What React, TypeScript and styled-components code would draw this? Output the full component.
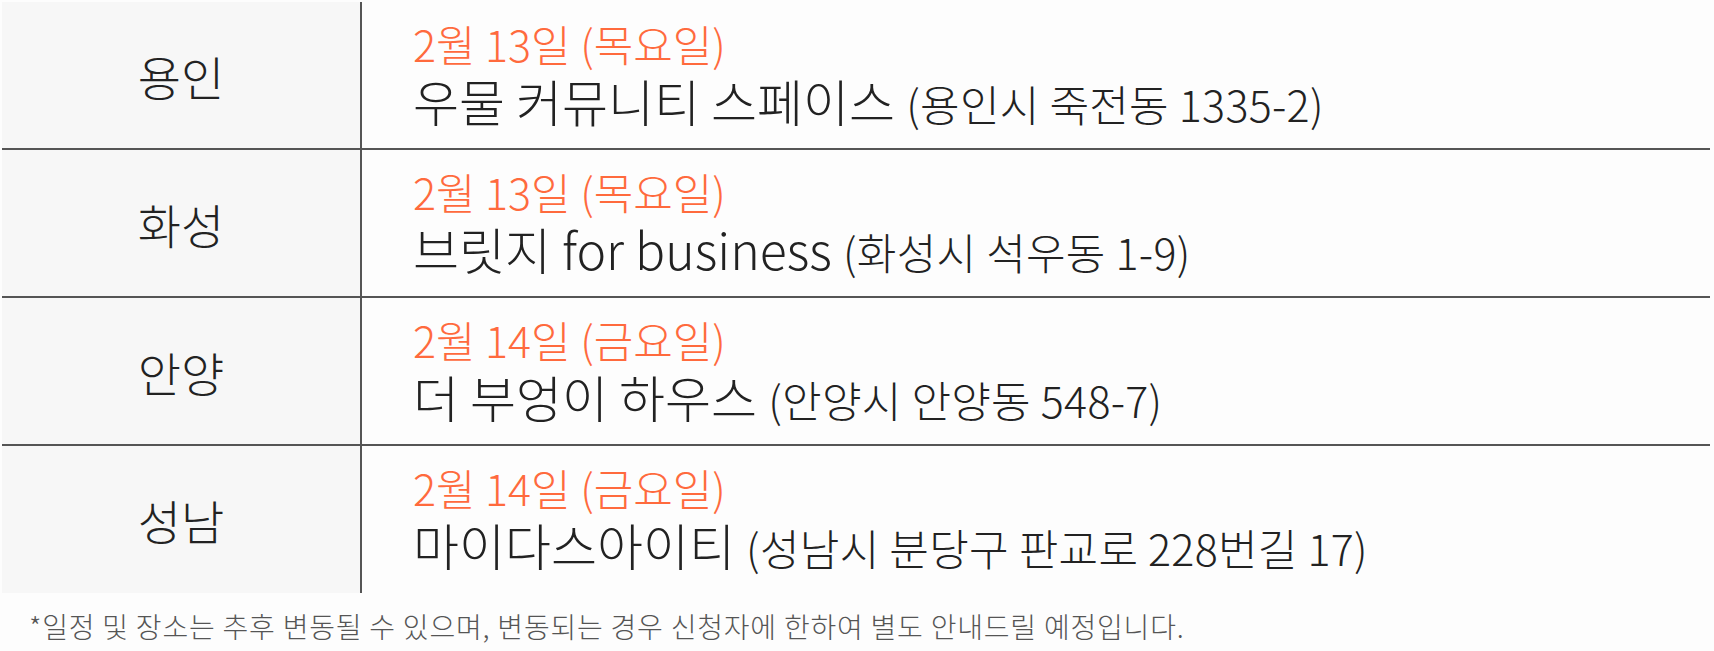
import styled, { createGlobalStyle } from "styled-components";

const GlobalStyle = createGlobalStyle`
  html, body {
    margin: 0;
    padding: 0;
    background: #fdfdfd;
  }
  body {
    font-family: "Noto Sans CJK KR", "Noto Sans", sans-serif;
    font-weight: 300;
    color: #222;
  }
`;

const Wrapper = styled.div`
  padding: 2px 4px 0 2px;
`;

const Table = styled.div`
  display: flex;
  flex-direction: column;
`;

const Row = styled.div<{ $last?: boolean }>`
  display: grid;
  grid-template-columns: 360px 1fr;
  height: ${(p) => (p.$last ? "147px" : "146px")};
  border-bottom: ${(p) => (p.$last ? "none" : "2px solid #555")};
`;

const Region = styled.div`
  display: flex;
  align-items: center;
  justify-content: center;
  background: #f7f7f7;
  border-right: 2px solid #555;
  font-size: 47px;
  color: #222;
`;

const Info = styled.div`
  display: flex;
  flex-direction: column;
  justify-content: center;
  padding-left: 51px;
`;

const DateLine = styled.div`
  color: #ff6a3d;
  font-size: 43px;
  line-height: 52px;
`;

const Venue = styled.div`
  font-size: 50px;
  line-height: 62px;
  color: #222;
`;

const Address = styled.span`
  font-size: 43px;
  letter-spacing: 0.3px;
`;

const Note = styled.p`
  margin: 15px 0 0 27px;
  font-size: 28px;
  line-height: 36px;
  color: #555;
  letter-spacing: 0.8px;
`;

const schedule = [
  { region: "용인", date: "2월 13일 (목요일)", venue: "우물 커뮤니티 스페이스", address: "(용인시 죽전동 1335-2)" },
  { region: "화성", date: "2월 13일 (목요일)", venue: "브릿지 for business", address: "(화성시 석우동 1-9)" },
  { region: "안양", date: "2월 14일 (금요일)", venue: "더 부엉이 하우스", address: "(안양시 안양동 548-7)" },
  { region: "성남", date: "2월 14일 (금요일)", venue: "마이다스아이티", address: "(성남시 분당구 판교로 228번길 17)" },
];

export default function App() {
  return (
    <Wrapper>
      <GlobalStyle />
      <Table>
        {schedule.map((item, index) => (
          <Row key={index} $last={index === schedule.length - 1}>
            <Region>{item.region}</Region>
            <Info>
              <DateLine>{item.date}</DateLine>
              <Venue>
                {item.venue} <Address>{item.address}</Address>
              </Venue>
            </Info>
          </Row>
        ))}
      </Table>
      <Note>*일정 및 장소는 추후 변동될 수 있으며, 변동되는 경우 신청자에 한하여 별도 안내드릴 예정입니다.</Note>
    </Wrapper>
  );
}
